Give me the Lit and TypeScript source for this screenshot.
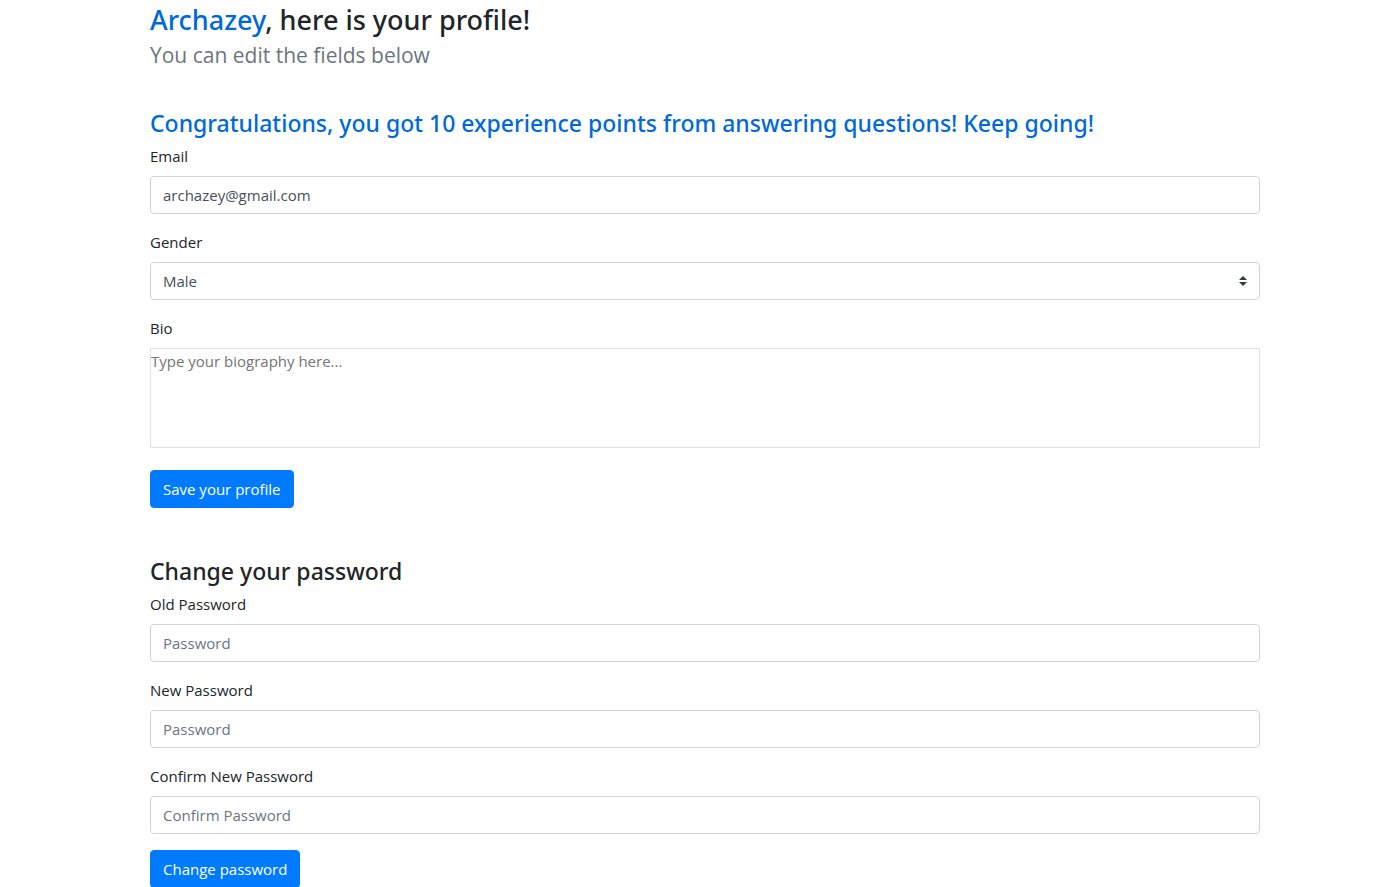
import { LitElement, html, css } from "lit";
import { customElement } from "lit/decorators.js";

@customElement("app-root")
export class AppRoot extends LitElement {
  static styles = css`
    :host {
      display: block;
      padding: 0 0 0 24px;
      background: #fff;
      color: #212529;
      font-family: "Open Sans", "Noto Sans", sans-serif;
      font-size: 15px;
      line-height: 24px;
    }
    *, *::before, *::after { box-sizing: border-box; }
    .container {
      width: 100%;
      max-width: 1140px;
      margin: 0 auto;
      padding: 0 15px;
    }
    h1, h2 { margin: 0; font-family: "Noto Sans", "Open Sans", sans-serif; font-weight: 500; }
    .title { padding-top: 2px; font-size: 27px; line-height: 36px; }
    .subtitle { margin: 0 0 36px; font-size: 21px; line-height: 34px; color: #6c757d; }
    .heading { margin-bottom: 6px; font-size: 23px; line-height: 30px; }
    .accent { color: #0069d9; }
    .group { margin-bottom: 16px; }
    .bio-group { margin-bottom: 22px; }
    .profile { margin-bottom: 48px; }
    label { display: block; margin-bottom: 8px; }
    input, select, textarea, button {
      margin: 0;
      font: inherit;
    }
    .control {
      display: block;
      width: 100%;
      height: 38px;
      padding: 6px 12px;
      border: 1px solid #ced4da;
      border-radius: 4px;
      background: #fff;
      color: #495057;
    }
    .select-wrap { display: grid; align-items: center; }
    .select-wrap > * { grid-area: 1 / 1; }
    .select { appearance: none; padding-right: 28px; }
    .arrows {
      justify-self: end;
      width: 8px;
      height: 10px;
      margin-right: 13px;
      pointer-events: none;
    }
    .bio {
      display: block;
      width: 100%;
      height: 100px;
      padding: 0;
      border: 1px solid #dee2e6;
      resize: none;
      background: #fff;
      color: #495057;
    }
    .control::placeholder { color: #6c757d; opacity: 1; }
    .bio::placeholder { color: #757575; opacity: 1; }
    .btn {
      display: block;
      height: 38px;
      padding: 6px 12px;
      border: 1px solid #007bff;
      border-radius: 4px;
      background: #007bff;
      color: #fff;
      cursor: pointer;
    }
  `;

  private passwordField(id: string, label: string, placeholder: string) {
    return html`
      <div class="group">
        <label for=${id}>${label}</label>
        <input class="control" id=${id} type="password" placeholder=${placeholder} />
      </div>
    `;
  }

  render() {
    return html`
      <main class="container">
        <h1 class="title"><span class="accent">Archazey</span>, here is your profile!</h1>
        <p class="subtitle">You can edit the fields below</p>

        <form class="profile" @submit=${this.stay}>
          <h2 class="heading accent">Congratulations, you got 10 experience points from answering questions! Keep going!</h2>
          <div class="group">
            <label for="email">Email</label>
            <input class="control" id="email" type="email" value="archazey@gmail.com" />
          </div>
          <div class="group">
            <label for="gender">Gender</label>
            <div class="select-wrap">
              <select class="control select" id="gender">
                <option selected>Male</option>
                <option>Female</option>
              </select>
              <svg class="arrows" viewBox="0 0 4 5" aria-hidden="true">
                <path fill="#343a40" d="M2 0L0 2h4zm0 5L0 3h4z" />
              </svg>
            </div>
          </div>
          <div class="bio-group">
            <label for="bio">Bio</label>
            <textarea class="bio" id="bio" placeholder="Type your biography here..."></textarea>
          </div>
          <button class="btn" type="submit">Save your profile</button>
        </form>

        <form @submit=${this.stay}>
          <h2 class="heading">Change your password</h2>
          ${this.passwordField("old-password", "Old Password", "Password")}
          ${this.passwordField("new-password", "New Password", "Password")}
          ${this.passwordField("confirm-password", "Confirm New Password", "Confirm Password")}
          <button class="btn" type="submit">Change password</button>
        </form>
      </main>
    `;
  }

  private stay(event: Event) {
    event.preventDefault();
  }
}
